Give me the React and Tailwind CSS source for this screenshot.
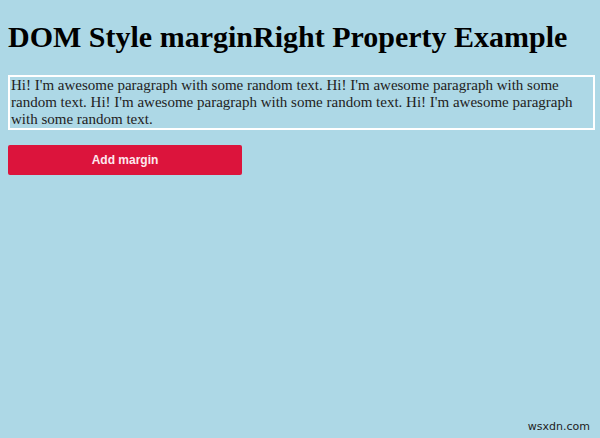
// Margin demo page
// Heading, bordered paragraph and a crimson button on light blue

const App = () => {
  return (
    <div className="relative min-h-[438px] bg-[#add8e6] pl-2 pr-[5px] pt-[1px] font-['Liberation_Serif',serif] text-black">
      <h1 className="mt-[18px] mb-[20px] text-[30px] font-bold leading-[36px]">
        DOM Style marginRight Property Example
      </h1>
      <p className="border-2 border-white px-[1px] text-[15px] leading-[17px] text-[#222]">
        Hi! I'm awesome paragraph with some random text. Hi! I'm awesome paragraph with some
        random text. Hi! I'm awesome paragraph with some random text. Hi! I'm awesome paragraph
        with some random text.
      </p>
      <button className="mt-[15px] flex h-[30px] w-[234px] items-center justify-center rounded-[2px] bg-[#dc143c] font-['Liberation_Sans',sans-serif] text-[12px] font-bold text-[#fde8ee]">
        Add margin
      </button>
      <span className="absolute right-[10px] bottom-[3px] font-['DejaVu_Sans',sans-serif] text-[11px] text-[#222]">
        wsxdn.com
      </span>
    </div>
  );
};

export default App;
